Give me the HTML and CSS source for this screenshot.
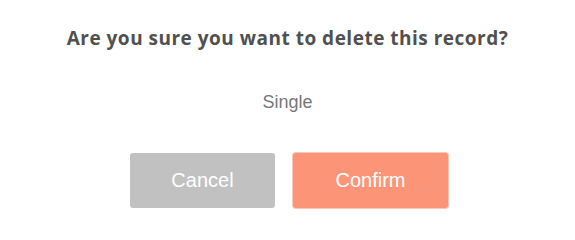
FILE: index.html
```html
<!DOCTYPE html>
<html>
<head>
<meta charset="utf-8">
<link rel="stylesheet" href="styles.css">
</head>
<body>
<div class="dialog">
  <h2 class="title">Are you sure you want to delete this record?</h2>
  <p class="name">Single</p>
  <div class="actions">
    <button class="btn btn-cancel">Cancel</button>
    <button class="btn btn-confirm">Confirm</button>
  </div>
</div>
</body>
</html>
```
FILE: styles.css
```css
html, body {
  margin: 0;
  padding: 0;
  background: #ffffff;
}
.dialog {
  width: 575px;
  height: 234px;
  box-sizing: border-box;
  padding-top: 25px;
  display: flex;
  flex-direction: column;
  align-items: center;
}
.title {
  margin: 0;
  font-family: "Open Sans", sans-serif;
  font-weight: 700;
  font-size: 19px;
  line-height: 26px;
  color: #505050;
  letter-spacing: 0.5px;
}
.name {
  margin: 39px 0 0 0;
  font-family: "Liberation Sans", Arial, sans-serif;
  font-size: 18px;
  line-height: 24px;
  color: #777777;
}
.actions {
  margin-top: 39px;
  margin-left: 3px;
  display: flex;
  gap: 18px;
}
.btn {
  height: 55px;
  border: none;
  border-radius: 3px;
  font-family: "Liberation Sans", Arial, sans-serif;
  font-size: 20px;
  color: #ffffff;
  padding: 0;
}
.btn-cancel {
  width: 145px;
  background: #c1c1c1;
}
.btn-confirm {
  width: 155px;
  background: #fc9577;
  box-shadow: 0 0 0 1px #fdc5b3;
}
```
